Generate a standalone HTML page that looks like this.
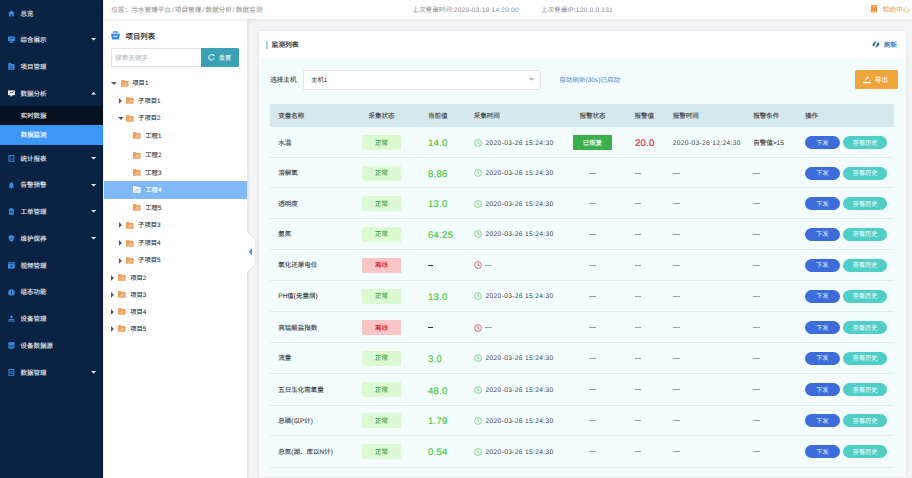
<!DOCTYPE html><html lang="zh-CN"><head><meta charset="utf-8"><style>
html,body{margin:0;padding:0;}
body{width:912px;height:478px;overflow:hidden;position:relative;background:#f4f4f6;font-family:"Liberation Sans",sans-serif;text-rendering:geometricPrecision;}
.t{position:absolute;white-space:nowrap;}
.b{position:absolute;}
svg{position:absolute;overflow:visible;}
i{font-style:normal;margin:0 1.0px;}
b.n{font-weight:normal;letter-spacing:0.22px;}
</style></head><body>
<div class="b" style="left:0px;top:0px;width:103.3px;height:478px;background:#0a2342;box-shadow:inset -0.7px 0 0 rgba(0,0,0,0.25);"></div>
<div class="b" style="left:0px;top:106px;width:102.8px;height:19.2px;background:#06121f;"></div>
<div class="b" style="left:0px;top:125.2px;width:103.3px;height:19.4px;background:#3d97f6;"></div>
<svg style="left:7.90px;top:9.70px" width="6.8" height="6.8" viewBox="0 0 7 7"><path d="M3.5 0.2 L7 3.4 L6 3.4 L6 6.6 L4.3 6.6 L4.3 4.6 L2.7 4.6 L2.7 6.6 L1 6.6 L1 3.4 L0 3.4 Z" fill="#3a8ce0"/></svg>
<div class="t" style="left:20.60px;top:9.50px;font-size:6.45px;line-height:10px;color:#e6e9ed;-webkit-text-stroke:0.12px #e6e9ed;">总览</div>
<svg style="left:7.90px;top:36.40px" width="6.8" height="6.8" viewBox="0 0 7 7"><rect x="0" y="0.5" width="7" height="4.8" fill="#3a8ce0"/><rect x="2.5" y="5.3" width="2" height="1" fill="#3a8ce0"/><rect x="1.5" y="6.2" width="4" height="0.8" fill="#3a8ce0"/><path d="M1.5 3.5 L3 2 L4 3 L5.5 1.5" stroke="#0b2240" stroke-width="0.6" fill="none"/></svg>
<div class="t" style="left:20.60px;top:36.20px;font-size:6.45px;line-height:10px;color:#e6e9ed;-webkit-text-stroke:0.12px #e6e9ed;">综合展示</div>
<svg style="left:90.5px;top:38.40px" width="5.2" height="2.6" viewBox="0 0 5.2 2.6"><path d="M0 0 L5.2 0 L2.6 2.6 Z" fill="#e8ebee"/></svg>
<svg style="left:7.90px;top:63.10px" width="6.8" height="6.8" viewBox="0 0 7 7"><path d="M0.3 0 L3.2 0 L3.9 1.1 L6.7 1.1 L6.7 7 L0.3 7 Z" fill="#3a8ce0"/><rect x="2" y="3.6" width="3" height="0.6" fill="#0b2240"/><rect x="2" y="5" width="3" height="0.6" fill="#0b2240"/></svg>
<div class="t" style="left:20.60px;top:62.90px;font-size:6.45px;line-height:10px;color:#e6e9ed;-webkit-text-stroke:0.12px #e6e9ed;">项目管理</div>
<svg style="left:7.90px;top:89.90px" width="6.8" height="6.8" viewBox="0 0 7 7"><rect x="0" y="0.5" width="7" height="4.8" fill="#ffffff"/><rect x="2.5" y="5.3" width="2" height="1.2" fill="#ffffff"/><path d="M1.5 3.8 L3 2.2 L4 3.2 L5.5 1.6" stroke="#0b2240" stroke-width="0.7" fill="none"/></svg>
<div class="t" style="left:20.60px;top:89.70px;font-size:6.45px;line-height:10px;color:#e6e9ed;-webkit-text-stroke:0.12px #e6e9ed;">数据分析</div>
<svg style="left:90.5px;top:91.90px" width="5.2" height="2.6" viewBox="0 0 5.2 2.6"><path d="M0 2.6 L5.2 2.6 L2.6 0 Z" fill="#e8ebee"/></svg>
<svg style="left:7.90px;top:154.80px" width="6.8" height="6.8" viewBox="0 0 7 7"><rect x="0.5" y="0" width="6" height="7" fill="#3a8ce0"/><rect x="1.5" y="1" width="4" height="5" fill="#0b2240"/><rect x="2" y="1.6" width="1.2" height="1.2" fill="#3a8ce0"/><rect x="3.8" y="3.2" width="1.2" height="1.2" fill="#3a8ce0"/><rect x="2" y="4.4" width="1.2" height="1.2" fill="#3a8ce0"/></svg>
<div class="t" style="left:20.60px;top:154.60px;font-size:6.45px;line-height:10px;color:#e6e9ed;-webkit-text-stroke:0.12px #e6e9ed;">统计报表</div>
<svg style="left:90.5px;top:156.80px" width="5.2" height="2.6" viewBox="0 0 5.2 2.6"><path d="M0 0 L5.2 0 L2.6 2.6 Z" fill="#e8ebee"/></svg>
<svg style="left:7.90px;top:181.54px" width="6.8" height="6.8" viewBox="0 0 7 7"><path d="M3.5 0.3 C5.3 0.8 5.5 2.5 5.5 4.3 L6.5 5.6 L0.5 5.6 L1.5 4.3 C1.5 2.5 1.7 0.8 3.5 0.3 Z" fill="#3a8ce0"/><circle cx="3.5" cy="6.3" r="0.8" fill="#3a8ce0"/></svg>
<div class="t" style="left:20.60px;top:181.34px;font-size:6.45px;line-height:10px;color:#e6e9ed;-webkit-text-stroke:0.12px #e6e9ed;">告警预警</div>
<svg style="left:90.5px;top:183.54px" width="5.2" height="2.6" viewBox="0 0 5.2 2.6"><path d="M0 0 L5.2 0 L2.6 2.6 Z" fill="#e8ebee"/></svg>
<svg style="left:7.90px;top:208.28px" width="6.8" height="6.8" viewBox="0 0 7 7"><rect x="1" y="0.8" width="5" height="6.2" rx="0.4" fill="#3a8ce0"/><rect x="2.3" y="0.2" width="2.4" height="1.2" fill="#3a8ce0"/><rect x="2" y="3" width="3" height="0.6" fill="#0b2240"/><rect x="2" y="4.6" width="3" height="0.6" fill="#0b2240"/></svg>
<div class="t" style="left:20.60px;top:208.08px;font-size:6.45px;line-height:10px;color:#e6e9ed;-webkit-text-stroke:0.12px #e6e9ed;">工单管理</div>
<svg style="left:90.5px;top:210.28px" width="5.2" height="2.6" viewBox="0 0 5.2 2.6"><path d="M0 0 L5.2 0 L2.6 2.6 Z" fill="#e8ebee"/></svg>
<svg style="left:7.90px;top:235.02px" width="6.8" height="6.8" viewBox="0 0 7 7"><path d="M3.5 0 L6.5 1.2 C6.5 4 5.5 6 3.5 7 C1.5 6 0.5 4 0.5 1.2 Z" fill="#3a8ce0"/><path d="M2.2 3.5 L3.2 4.5 L4.9 2.6" stroke="#0b2240" stroke-width="0.7" fill="none"/></svg>
<div class="t" style="left:20.60px;top:234.82px;font-size:6.45px;line-height:10px;color:#e6e9ed;-webkit-text-stroke:0.12px #e6e9ed;">维护保养</div>
<svg style="left:90.5px;top:237.02px" width="5.2" height="2.6" viewBox="0 0 5.2 2.6"><path d="M0 0 L5.2 0 L2.6 2.6 Z" fill="#e8ebee"/></svg>
<svg style="left:7.90px;top:261.76px" width="6.8" height="6.8" viewBox="0 0 7 7"><rect x="0" y="0.3" width="7" height="6.4" fill="#3a8ce0"/><rect x="0" y="1.5" width="7" height="0.5" fill="#0b2240"/><path d="M2.8 3 L5 4.2 L2.8 5.4 Z" fill="#0b2240"/></svg>
<div class="t" style="left:20.60px;top:261.56px;font-size:6.45px;line-height:10px;color:#e6e9ed;-webkit-text-stroke:0.12px #e6e9ed;">视频管理</div>
<svg style="left:7.90px;top:288.50px" width="6.8" height="6.8" viewBox="0 0 7 7"><circle cx="3.5" cy="3.5" r="3.3" fill="#3a8ce0"/><rect x="3" y="1.5" width="1" height="2.5" fill="#0b2240"/><rect x="3" y="4.7" width="1" height="1" fill="#0b2240"/></svg>
<div class="t" style="left:20.60px;top:288.30px;font-size:6.45px;line-height:10px;color:#e6e9ed;-webkit-text-stroke:0.12px #e6e9ed;">组态功能</div>
<svg style="left:7.90px;top:315.24px" width="6.8" height="6.8" viewBox="0 0 7 7"><circle cx="3.5" cy="2" r="1.4" fill="#3a8ce0"/><path d="M0.3 6.8 L0.3 5 C1 3.8 6 3.8 6.7 5 L6.7 6.8 Z" fill="#3a8ce0"/><rect x="0.3" y="5.4" width="6.4" height="0.5" fill="#0b2240"/></svg>
<div class="t" style="left:20.60px;top:315.04px;font-size:6.45px;line-height:10px;color:#e6e9ed;-webkit-text-stroke:0.12px #e6e9ed;">设备管理</div>
<svg style="left:7.90px;top:341.98px" width="6.8" height="6.8" viewBox="0 0 7 7"><ellipse cx="3.5" cy="1.4" rx="3.3" ry="1.3" fill="#3a8ce0"/><rect x="0.2" y="1.4" width="6.6" height="4.2" fill="#3a8ce0"/><ellipse cx="3.5" cy="5.6" rx="3.3" ry="1.3" fill="#3a8ce0"/><path d="M0.2 3.1 Q3.5 4.6 6.8 3.1" stroke="#0b2240" stroke-width="0.5" fill="none"/><path d="M0.2 4.6 Q3.5 6.1 6.8 4.6" stroke="#0b2240" stroke-width="0.5" fill="none"/></svg>
<div class="t" style="left:20.60px;top:341.78px;font-size:6.45px;line-height:10px;color:#e6e9ed;-webkit-text-stroke:0.12px #e6e9ed;">设备数据源</div>
<svg style="left:7.90px;top:368.72px" width="6.8" height="6.8" viewBox="0 0 7 7"><rect x="0.5" y="0" width="6" height="7" fill="#3a8ce0"/><rect x="1.5" y="1" width="4" height="5" fill="#0b2240"/><rect x="2" y="2" width="3" height="0.6" fill="#3a8ce0"/><rect x="2" y="3.3" width="3" height="0.6" fill="#3a8ce0"/><rect x="2" y="4.6" width="3" height="0.6" fill="#3a8ce0"/></svg>
<div class="t" style="left:20.60px;top:368.52px;font-size:6.45px;line-height:10px;color:#e6e9ed;-webkit-text-stroke:0.12px #e6e9ed;">数据管理</div>
<svg style="left:90.5px;top:370.72px" width="5.2" height="2.6" viewBox="0 0 5.2 2.6"><path d="M0 0 L5.2 0 L2.6 2.6 Z" fill="#e8ebee"/></svg>
<div class="t" style="left:20.70px;top:112.10px;font-size:6.45px;line-height:10px;color:#e6e9ed;-webkit-text-stroke:0.12px #e6e9ed;">实时数据</div>
<div class="t" style="left:20.70px;top:131.40px;font-size:6.45px;line-height:10px;color:#ffffff;-webkit-text-stroke:0.12px #fff;">数据监测</div>
<div class="b" style="left:103.5px;top:0px;width:808.5px;height:19.4px;background:#ffffff;box-shadow:0 1px 3px rgba(0,0,0,0.10);z-index:2;"></div>
<div style="position:absolute;left:0;top:0;width:912px;height:19px;z-index:3;">
<div class="t" style="left:111.20px;top:5.50px;font-size:6.65px;line-height:10px;color:#8a8a8a;">位置：污水管理平台<i>/</i>项目管理<i>/</i>数据分析<i>/</i>数据监测</div>
<div class="t" style="left:412.50px;top:5.50px;font-size:6.55px;line-height:10px;color:#8a8a8a;">上次登录时间<b class=n>:2020-03-19 14:20:00</b></div>
<div class="t" style="left:541.00px;top:5.50px;font-size:6.55px;line-height:10px;color:#8a8a8a;">上次登录<b class=n>IP:128.0.0.131</b></div>
<svg style="left:871px;top:5.3px" width="6" height="7.6" viewBox="0 0 6 7.6"><rect x="0" y="0" width="6" height="7.6" rx="0.4" fill="#f0953a"/><rect x="2.6" y="0" width="0.8" height="2.6" fill="#ffffff"/><rect x="0.7" y="6.1" width="4.6" height="0.7" fill="#f9d2aa"/></svg>
<div class="t" style="left:882.40px;top:5.90px;font-size:6.8px;line-height:10px;color:#f29a48;">帮助中心</div>
</div>
<div class="b" style="left:103.5px;top:19px;width:143.5px;height:459px;background:#ffffff;box-shadow:1px 0 3px rgba(0,0,0,0.10);z-index:1;"></div>
<div style="position:absolute;left:0;top:0;width:912px;height:478px;z-index:2;">
<svg style="left:111px;top:30.5px" width="9" height="8.4" viewBox="0 0 9 8.4"><path d="M2.5 0 L6.5 0 L7.6 2.2 L1.4 2.2 Z" fill="#6aaef5"/><path d="M0 2.8 L9 2.8 L8 8.4 L1 8.4 Z" fill="#3d8ff2"/><rect x="2.6" y="4.8" width="3.8" height="0.9" fill="#ffffff"/></svg>
<div class="t" style="left:125.50px;top:31.80px;font-size:7.4px;line-height:10px;color:#2a2a2a;-webkit-text-stroke:0.2px #2a2a2a;">项目列表</div>
<div class="b" style="left:110.5px;top:48.3px;width:90px;height:18.4px;background:#ffffff;box-sizing:border-box;border:0.6px solid #e0e3e9;border-right:none;border-radius:1.5px 0 0 1.5px;"></div>
<div class="t" style="left:115.00px;top:53.80px;font-size:6.6px;line-height:10px;color:#b6b9bf;">搜索关键字</div>
<div class="b" style="left:200.5px;top:48.3px;width:38.3px;height:18.4px;background:#3aa1b6;border-radius:0 1.5px 1.5px 0;"></div>
<svg style="left:207.6px;top:54.2px" width="6.8" height="6.8" viewBox="0 0 7 7"><path d="M5.9 2 A2.8 2.8 0 1 0 6.2 4.3" stroke="#ffffff" stroke-width="1" fill="none"/><path d="M4.6 0.6 L6.5 0.9 L6.3 2.9 Z" fill="#ffffff"/></svg>
<div class="t" style="left:218.80px;top:53.60px;font-size:6.2px;line-height:10px;color:#ffffff;">重置</div>
<div class="b" style="left:104px;top:180.7px;width:143px;height:18.2px;background:#80b8f8;"></div>
<svg style="left:121.0px;top:79.70px" width="7.6" height="6.7" viewBox="0 0 7.6 6.7"><path d="M0 0.5 Q0 0 0.5 0 L2.6 0 Q3 0 3.3 0.4 L3.8 1 L7.1 1 Q7.6 1 7.6 1.5 L7.6 6.2 Q7.6 6.7 7.1 6.7 L0.5 6.7 Q0 6.7 0 6.2 Z" fill="#f0a05c"/><rect x="3.2" y="2.9" width="2.9" height="0.7" fill="#f9dcc2"/><rect x="1.6" y="4.6" width="4.5" height="0.7" fill="#f9dcc2"/></svg>
<div class="t" style="left:132.30px;top:79.20px;font-size:6.3px;line-height:10px;color:#3c3c3c;-webkit-text-stroke:0.1px #3c3c3c;">项目1</div>
<svg style="left:110.90px;top:81.80px" width="5.8" height="2.9" viewBox="0 0 5.8 2.9"><path d="M0 0 L5.8 0 L2.9 2.9 Z" fill="#555"/></svg>
<svg style="left:126.0px;top:97.10px" width="7.6" height="6.7" viewBox="0 0 7.6 6.7"><path d="M0 0.5 Q0 0 0.5 0 L2.6 0 Q3 0 3.3 0.4 L3.8 1 L7.1 1 Q7.6 1 7.6 1.5 L7.6 6.2 Q7.6 6.7 7.1 6.7 L0.5 6.7 Q0 6.7 0 6.2 Z" fill="#f0a05c"/><rect x="3.2" y="2.9" width="2.9" height="0.7" fill="#f9dcc2"/><rect x="1.6" y="4.6" width="4.5" height="0.7" fill="#f9dcc2"/></svg>
<div class="t" style="left:138.10px;top:96.60px;font-size:6.3px;line-height:10px;color:#3c3c3c;-webkit-text-stroke:0.1px #3c3c3c;">子项目1</div>
<svg style="left:118.90px;top:97.70px" width="2.9" height="5.8" viewBox="0 0 2.9 5.8"><path d="M0 0 L2.9 2.9 L0 5.8 Z" fill="#555"/></svg>
<svg style="left:126.0px;top:114.70px" width="7.6" height="6.7" viewBox="0 0 7.6 6.7"><path d="M0 0.5 Q0 0 0.5 0 L2.6 0 Q3 0 3.3 0.4 L3.8 1 L7.1 1 Q7.6 1 7.6 1.5 L7.6 6.2 Q7.6 6.7 7.1 6.7 L0.5 6.7 Q0 6.7 0 6.2 Z" fill="#f0a05c"/><rect x="3.2" y="2.9" width="2.9" height="0.7" fill="#f9dcc2"/><rect x="1.6" y="4.6" width="4.5" height="0.7" fill="#f9dcc2"/></svg>
<div class="t" style="left:138.10px;top:114.20px;font-size:6.3px;line-height:10px;color:#3c3c3c;-webkit-text-stroke:0.1px #3c3c3c;">子项目2</div>
<svg style="left:117.60px;top:116.80px" width="5.8" height="2.9" viewBox="0 0 5.8 2.9"><path d="M0 0 L5.8 0 L2.9 2.9 Z" fill="#555"/></svg>
<svg style="left:133.1px;top:132.40px" width="7.6" height="6.7" viewBox="0 0 7.6 6.7"><path d="M0 0.5 Q0 0 0.5 0 L2.6 0 Q3 0 3.3 0.4 L3.8 1 L7.1 1 Q7.6 1 7.6 1.5 L7.6 6.2 Q7.6 6.7 7.1 6.7 L0.5 6.7 Q0 6.7 0 6.2 Z" fill="#f0a05c"/><rect x="3.2" y="2.9" width="2.9" height="0.7" fill="#f9dcc2"/><rect x="1.6" y="4.6" width="4.5" height="0.7" fill="#f9dcc2"/></svg>
<div class="t" style="left:145.30px;top:131.90px;font-size:6.3px;line-height:10px;color:#3c3c3c;-webkit-text-stroke:0.1px #3c3c3c;">工程1</div>
<svg style="left:133.1px;top:151.90px" width="7.6" height="6.7" viewBox="0 0 7.6 6.7"><path d="M0 0.5 Q0 0 0.5 0 L2.6 0 Q3 0 3.3 0.4 L3.8 1 L7.1 1 Q7.6 1 7.6 1.5 L7.6 6.2 Q7.6 6.7 7.1 6.7 L0.5 6.7 Q0 6.7 0 6.2 Z" fill="#f0a05c"/><rect x="3.2" y="2.9" width="2.9" height="0.7" fill="#f9dcc2"/><rect x="1.6" y="4.6" width="4.5" height="0.7" fill="#f9dcc2"/></svg>
<div class="t" style="left:145.30px;top:151.40px;font-size:6.3px;line-height:10px;color:#3c3c3c;-webkit-text-stroke:0.1px #3c3c3c;">工程2</div>
<svg style="left:133.1px;top:169.30px" width="7.6" height="6.7" viewBox="0 0 7.6 6.7"><path d="M0 0.5 Q0 0 0.5 0 L2.6 0 Q3 0 3.3 0.4 L3.8 1 L7.1 1 Q7.6 1 7.6 1.5 L7.6 6.2 Q7.6 6.7 7.1 6.7 L0.5 6.7 Q0 6.7 0 6.2 Z" fill="#f0a05c"/><rect x="3.2" y="2.9" width="2.9" height="0.7" fill="#f9dcc2"/><rect x="1.6" y="4.6" width="4.5" height="0.7" fill="#f9dcc2"/></svg>
<div class="t" style="left:145.30px;top:168.80px;font-size:6.3px;line-height:10px;color:#3c3c3c;-webkit-text-stroke:0.1px #3c3c3c;">工程3</div>
<svg style="left:133.1px;top:186.30px" width="7.6" height="6.7" viewBox="0 0 7.6 6.7"><path d="M0 0.5 Q0 0 0.5 0 L2.6 0 Q3 0 3.3 0.4 L3.8 1 L7.1 1 Q7.6 1 7.6 1.5 L7.6 6.2 Q7.6 6.7 7.1 6.7 L0.5 6.7 Q0 6.7 0 6.2 Z" fill="#ffffff"/><rect x="3.2" y="2.9" width="2.9" height="0.7" fill="#80b8f8"/><rect x="1.6" y="4.6" width="4.5" height="0.7" fill="#80b8f8"/></svg>
<div class="t" style="left:145.30px;top:185.80px;font-size:6.3px;line-height:10px;color:#ffffff;-webkit-text-stroke:0.1px #ffffff;">工程4</div>
<svg style="left:133.1px;top:204.00px" width="7.6" height="6.7" viewBox="0 0 7.6 6.7"><path d="M0 0.5 Q0 0 0.5 0 L2.6 0 Q3 0 3.3 0.4 L3.8 1 L7.1 1 Q7.6 1 7.6 1.5 L7.6 6.2 Q7.6 6.7 7.1 6.7 L0.5 6.7 Q0 6.7 0 6.2 Z" fill="#f0a05c"/><rect x="3.2" y="2.9" width="2.9" height="0.7" fill="#f9dcc2"/><rect x="1.6" y="4.6" width="4.5" height="0.7" fill="#f9dcc2"/></svg>
<div class="t" style="left:145.30px;top:203.50px;font-size:6.3px;line-height:10px;color:#3c3c3c;-webkit-text-stroke:0.1px #3c3c3c;">工程5</div>
<svg style="left:126.0px;top:221.80px" width="7.6" height="6.7" viewBox="0 0 7.6 6.7"><path d="M0 0.5 Q0 0 0.5 0 L2.6 0 Q3 0 3.3 0.4 L3.8 1 L7.1 1 Q7.6 1 7.6 1.5 L7.6 6.2 Q7.6 6.7 7.1 6.7 L0.5 6.7 Q0 6.7 0 6.2 Z" fill="#f0a05c"/><rect x="3.2" y="2.9" width="2.9" height="0.7" fill="#f9dcc2"/><rect x="1.6" y="4.6" width="4.5" height="0.7" fill="#f9dcc2"/></svg>
<div class="t" style="left:138.10px;top:221.30px;font-size:6.3px;line-height:10px;color:#3c3c3c;-webkit-text-stroke:0.1px #3c3c3c;">子项目3</div>
<svg style="left:118.90px;top:222.40px" width="2.9" height="5.8" viewBox="0 0 2.9 5.8"><path d="M0 0 L2.9 2.9 L0 5.8 Z" fill="#555"/></svg>
<svg style="left:126.0px;top:239.50px" width="7.6" height="6.7" viewBox="0 0 7.6 6.7"><path d="M0 0.5 Q0 0 0.5 0 L2.6 0 Q3 0 3.3 0.4 L3.8 1 L7.1 1 Q7.6 1 7.6 1.5 L7.6 6.2 Q7.6 6.7 7.1 6.7 L0.5 6.7 Q0 6.7 0 6.2 Z" fill="#f0a05c"/><rect x="3.2" y="2.9" width="2.9" height="0.7" fill="#f9dcc2"/><rect x="1.6" y="4.6" width="4.5" height="0.7" fill="#f9dcc2"/></svg>
<div class="t" style="left:138.10px;top:239.00px;font-size:6.3px;line-height:10px;color:#3c3c3c;-webkit-text-stroke:0.1px #3c3c3c;">子项目4</div>
<svg style="left:118.90px;top:240.10px" width="2.9" height="5.8" viewBox="0 0 2.9 5.8"><path d="M0 0 L2.9 2.9 L0 5.8 Z" fill="#555"/></svg>
<svg style="left:126.0px;top:256.90px" width="7.6" height="6.7" viewBox="0 0 7.6 6.7"><path d="M0 0.5 Q0 0 0.5 0 L2.6 0 Q3 0 3.3 0.4 L3.8 1 L7.1 1 Q7.6 1 7.6 1.5 L7.6 6.2 Q7.6 6.7 7.1 6.7 L0.5 6.7 Q0 6.7 0 6.2 Z" fill="#f0a05c"/><rect x="3.2" y="2.9" width="2.9" height="0.7" fill="#f9dcc2"/><rect x="1.6" y="4.6" width="4.5" height="0.7" fill="#f9dcc2"/></svg>
<div class="t" style="left:138.10px;top:256.40px;font-size:6.3px;line-height:10px;color:#3c3c3c;-webkit-text-stroke:0.1px #3c3c3c;">子项目5</div>
<svg style="left:118.90px;top:257.50px" width="2.9" height="5.8" viewBox="0 0 2.9 5.8"><path d="M0 0 L2.9 2.9 L0 5.8 Z" fill="#555"/></svg>
<svg style="left:118.0px;top:274.20px" width="7.6" height="6.7" viewBox="0 0 7.6 6.7"><path d="M0 0.5 Q0 0 0.5 0 L2.6 0 Q3 0 3.3 0.4 L3.8 1 L7.1 1 Q7.6 1 7.6 1.5 L7.6 6.2 Q7.6 6.7 7.1 6.7 L0.5 6.7 Q0 6.7 0 6.2 Z" fill="#f0a05c"/><rect x="3.2" y="2.9" width="2.9" height="0.7" fill="#f9dcc2"/><rect x="1.6" y="4.6" width="4.5" height="0.7" fill="#f9dcc2"/></svg>
<div class="t" style="left:130.20px;top:273.70px;font-size:6.3px;line-height:10px;color:#3c3c3c;-webkit-text-stroke:0.1px #3c3c3c;">项目2</div>
<svg style="left:111.10px;top:274.80px" width="2.9" height="5.8" viewBox="0 0 2.9 5.8"><path d="M0 0 L2.9 2.9 L0 5.8 Z" fill="#555"/></svg>
<svg style="left:118.0px;top:291.30px" width="7.6" height="6.7" viewBox="0 0 7.6 6.7"><path d="M0 0.5 Q0 0 0.5 0 L2.6 0 Q3 0 3.3 0.4 L3.8 1 L7.1 1 Q7.6 1 7.6 1.5 L7.6 6.2 Q7.6 6.7 7.1 6.7 L0.5 6.7 Q0 6.7 0 6.2 Z" fill="#f0a05c"/><rect x="3.2" y="2.9" width="2.9" height="0.7" fill="#f9dcc2"/><rect x="1.6" y="4.6" width="4.5" height="0.7" fill="#f9dcc2"/></svg>
<div class="t" style="left:130.20px;top:290.80px;font-size:6.3px;line-height:10px;color:#3c3c3c;-webkit-text-stroke:0.1px #3c3c3c;">项目3</div>
<svg style="left:111.10px;top:291.90px" width="2.9" height="5.8" viewBox="0 0 2.9 5.8"><path d="M0 0 L2.9 2.9 L0 5.8 Z" fill="#555"/></svg>
<svg style="left:118.0px;top:308.40px" width="7.6" height="6.7" viewBox="0 0 7.6 6.7"><path d="M0 0.5 Q0 0 0.5 0 L2.6 0 Q3 0 3.3 0.4 L3.8 1 L7.1 1 Q7.6 1 7.6 1.5 L7.6 6.2 Q7.6 6.7 7.1 6.7 L0.5 6.7 Q0 6.7 0 6.2 Z" fill="#f0a05c"/><rect x="3.2" y="2.9" width="2.9" height="0.7" fill="#f9dcc2"/><rect x="1.6" y="4.6" width="4.5" height="0.7" fill="#f9dcc2"/></svg>
<div class="t" style="left:130.20px;top:307.90px;font-size:6.3px;line-height:10px;color:#3c3c3c;-webkit-text-stroke:0.1px #3c3c3c;">项目4</div>
<svg style="left:111.10px;top:309.00px" width="2.9" height="5.8" viewBox="0 0 2.9 5.8"><path d="M0 0 L2.9 2.9 L0 5.8 Z" fill="#555"/></svg>
<svg style="left:118.0px;top:325.40px" width="7.6" height="6.7" viewBox="0 0 7.6 6.7"><path d="M0 0.5 Q0 0 0.5 0 L2.6 0 Q3 0 3.3 0.4 L3.8 1 L7.1 1 Q7.6 1 7.6 1.5 L7.6 6.2 Q7.6 6.7 7.1 6.7 L0.5 6.7 Q0 6.7 0 6.2 Z" fill="#f0a05c"/><rect x="3.2" y="2.9" width="2.9" height="0.7" fill="#f9dcc2"/><rect x="1.6" y="4.6" width="4.5" height="0.7" fill="#f9dcc2"/></svg>
<div class="t" style="left:130.20px;top:324.90px;font-size:6.3px;line-height:10px;color:#3c3c3c;-webkit-text-stroke:0.1px #3c3c3c;">项目5</div>
<svg style="left:111.10px;top:326.00px" width="2.9" height="5.8" viewBox="0 0 2.9 5.8"><path d="M0 0 L2.9 2.9 L0 5.8 Z" fill="#555"/></svg>
</div>
<svg style="left:245.8px;top:228.8px;z-index:2" width="11" height="46" viewBox="0 0 11 46"><path d="M1 0 C1 4 2.5 5.5 5 7.5 C7.8 9.5 8.9 10.5 8.9 13 L8.9 33 C8.9 35.5 7.8 36.5 5 38.5 C2.5 40.5 1 42 1 46" stroke="rgba(0,0,0,0.035)" stroke-width="2" fill="none" transform="translate(0.6,0)"/><path d="M0 0 L1 0 C1 4 2.5 5.5 5 7.5 C7.8 9.5 8.9 10.5 8.9 13 L8.9 33 C8.9 35.5 7.8 36.5 5 38.5 C2.5 40.5 1 42 1 46 L0 46 Z" fill="#ffffff"/></svg>
<svg style="left:248.9px;top:248.2px;z-index:3" width="3" height="7.4" viewBox="0 0 3 7.4"><path d="M3 0 L0 3.7 L3 7.4 Z" fill="#3a8ee6"/></svg>
<div class="b" style="left:259px;top:31px;width:647px;height:446px;background:#f3fcfe;box-shadow:0 0 3px rgba(0,0,0,0.12);"></div>
<div class="b" style="left:259px;top:31px;width:647px;height:27.3px;background:#ffffff;"></div>
<div class="b" style="left:266.1px;top:41.1px;width:1.8px;height:7.8px;background:#a4d0fb;"></div>
<div class="t" style="left:271.40px;top:40.90px;font-size:6.75px;line-height:10px;color:#333333;-webkit-text-stroke:0.2px #333;">监测列表</div>
<svg style="left:872px;top:41.2px" width="8" height="6.8" viewBox="0 0 8 6.8"><path d="M4.3 0.2 C2.2 0.8 0.6 2.4 0.5 4.1 C0.5 5.3 1.9 5.6 2.5 4.7 C2.4 3.2 3.1 1.8 4.5 1.0 Z" fill="#1f66a6"/><path d="M3.5 6.6 C5.6 6 7.2 4.4 7.3 2.7 C7.3 1.5 5.9 1.2 5.3 2.1 C5.4 3.6 4.7 5 3.3 5.8 Z" fill="#1f66a6"/></svg>
<div class="t" style="left:884.00px;top:40.60px;font-size:6.5px;line-height:10px;color:#2a6cae;-webkit-text-stroke:0.15px #2a6cae;">刷新</div>
<div class="t" style="left:270.20px;top:75.80px;font-size:6.6px;line-height:10px;color:#3c3c3c;-webkit-text-stroke:0.1px #3c3c3c;">选择主机</div>
<div class="b" style="left:302.5px;top:69.5px;width:238.8px;height:20.1px;background:#ffffff;box-sizing:border-box;border:0.6px solid #e0e3e9;border-radius:1.5px;"></div>
<div class="t" style="left:311.00px;top:75.80px;font-size:6.4px;line-height:10px;color:#3c3c3c;">主机1</div>
<svg style="left:528.5px;top:78.4px" width="5.6" height="2.8" viewBox="0 0 5.6 2.8"><path d="M0 0 L5.6 0 L2.8 2.8 Z" fill="#b0b3b8"/></svg>
<div class="t" style="left:559.30px;top:75.80px;font-size:6.55px;line-height:10px;color:#4a8cc6;">自动刷新(30s)已启动</div>
<div class="b" style="left:855.1px;top:70px;width:42.8px;height:18.9px;background:#eda53c;border-radius:1.5px;"></div>
<svg style="left:863px;top:76px" width="8" height="7.4" viewBox="0 0 8 7.4"><rect x="0" y="5.8" width="7.9" height="1.5" rx="0.4" fill="#ffffff"/><path d="M2 4.9 C2.1 3.3 2.9 2.2 3.9 1.9 L3.7 0 L6 1.4 L4.5 3.4 L4.3 2.8 C3.4 3.2 2.7 4 2 4.9 Z" fill="#ffffff"/></svg>
<div class="t" style="left:874.70px;top:76.00px;font-size:6.65px;line-height:10px;color:#ffffff;">导出</div>
<div class="b" style="left:270.3px;top:104.3px;width:624px;height:22.9px;background:#d5e8ed;"></div>
<div class="t" style="left:278.30px;top:111.90px;font-size:6.5px;line-height:10px;color:#3c3c3c;-webkit-text-stroke:0.1px #3c3c3c;">变量名称</div>
<div class="t" style="left:361.50px;width:40.00px;text-align:center;top:111.90px;font-size:6.5px;line-height:10px;color:#3c3c3c;-webkit-text-stroke:0.1px #3c3c3c;">采集状态</div>
<div class="t" style="left:428.00px;top:111.90px;font-size:6.5px;line-height:10px;color:#3c3c3c;-webkit-text-stroke:0.1px #3c3c3c;">当前值</div>
<div class="t" style="left:473.75px;top:111.90px;font-size:6.5px;line-height:10px;color:#3c3c3c;-webkit-text-stroke:0.1px #3c3c3c;">采集时间</div>
<div class="t" style="left:572.60px;width:40.00px;text-align:center;top:111.90px;font-size:6.5px;line-height:10px;color:#3c3c3c;-webkit-text-stroke:0.1px #3c3c3c;">报警状态</div>
<div class="t" style="left:634.50px;top:111.90px;font-size:6.5px;line-height:10px;color:#3c3c3c;-webkit-text-stroke:0.1px #3c3c3c;">报警值</div>
<div class="t" style="left:672.75px;top:111.90px;font-size:6.5px;line-height:10px;color:#3c3c3c;-webkit-text-stroke:0.1px #3c3c3c;">报警时间</div>
<div class="t" style="left:753.25px;top:111.90px;font-size:6.5px;line-height:10px;color:#3c3c3c;-webkit-text-stroke:0.1px #3c3c3c;">报警条件</div>
<div class="t" style="left:805.00px;top:111.90px;font-size:6.5px;line-height:10px;color:#3c3c3c;-webkit-text-stroke:0.1px #3c3c3c;">操作</div>
<div class="t" style="left:278.30px;top:138.60px;font-size:6.5px;line-height:10px;color:#3c3c3c;-webkit-text-stroke:0.1px #3c3c3c;">水温</div>
<div class="b" style="left:362.1px;top:135.1px;width:38.7px;height:15px;background:#dcfad2;"></div>
<div class="t" style="left:362.05px;width:38.70px;text-align:center;top:138.60px;font-size:6.4px;line-height:10px;color:#2f9a40;-webkit-text-stroke:0.12px #2f9a40;">正常</div>
<div class="t" style="left:428.00px;top:137.40px;font-size:9.5px;line-height:14px;color:#45c936;letter-spacing:0.3px;-webkit-text-stroke:0.15px #45c936;">14.0</div>
<svg style="left:473.75px;top:138.60px" width="8" height="8" viewBox="0 0 8 8"><circle cx="4" cy="4" r="3.4" stroke="#6fd06a" stroke-width="0.8" fill="none"/><path d="M4 1.9 L4 4.2 L5.5 5.1" stroke="#6fd06a" stroke-width="0.8" fill="none"/></svg>
<div class="t" style="left:485.50px;top:138.60px;font-size:6.65px;line-height:10px;color:#444444;letter-spacing:0.34px;">2020-03-26 15:24:30</div>
<div class="b" style="left:573.25px;top:135.1px;width:38.25px;height:15px;background:#3bb14d;"></div>
<div class="t" style="left:573.27px;width:38.25px;text-align:center;top:138.60px;font-size:6.4px;line-height:10px;color:#ffffff;-webkit-text-stroke:0.1px #ffffff;">已恢复</div>
<div class="t" style="left:635.00px;top:137.40px;font-size:9.5px;line-height:14px;color:#d8232f;letter-spacing:0.3px;-webkit-text-stroke:0.15px #d8232f;">20.0</div>
<div class="t" style="left:672.75px;top:138.60px;font-size:6.65px;line-height:10px;color:#444444;letter-spacing:0.34px;">2020-03-26 12:24:30</div>
<div class="t" style="left:753.25px;top:138.60px;font-size:6.5px;line-height:10px;color:#3c3c3c;-webkit-text-stroke:0.1px #3c3c3c;">告警值&gt;15</div>
<div class="b" style="left:804.9px;top:135.9px;width:34.8px;height:13.4px;background:#3b6cd9;border-radius:7px;"></div>
<div class="t" style="left:804.90px;width:34.80px;text-align:center;top:138.60px;font-size:6.3px;line-height:10px;color:#f0f4ff;">下发</div>
<div class="b" style="left:843.2px;top:135.9px;width:43.7px;height:13.4px;background:#50cec8;border-radius:7px;"></div>
<div class="t" style="left:843.20px;width:43.70px;text-align:center;top:138.60px;font-size:6.3px;line-height:10px;color:#f0fffd;">查看历史</div>
<div class="b" style="left:270.1px;top:157.3px;width:624.2px;height:1px;background:#e6ecee;"></div>
<div class="t" style="left:278.30px;top:169.30px;font-size:6.5px;line-height:10px;color:#3c3c3c;-webkit-text-stroke:0.1px #3c3c3c;">溶解氧</div>
<div class="b" style="left:362.1px;top:165.8px;width:38.7px;height:15px;background:#dcfad2;"></div>
<div class="t" style="left:362.05px;width:38.70px;text-align:center;top:169.30px;font-size:6.4px;line-height:10px;color:#2f9a40;-webkit-text-stroke:0.12px #2f9a40;">正常</div>
<div class="t" style="left:428.00px;top:168.10px;font-size:9.5px;line-height:14px;color:#45c936;letter-spacing:0.3px;-webkit-text-stroke:0.15px #45c936;">8.86</div>
<svg style="left:473.75px;top:169.30px" width="8" height="8" viewBox="0 0 8 8"><circle cx="4" cy="4" r="3.4" stroke="#6fd06a" stroke-width="0.8" fill="none"/><path d="M4 1.9 L4 4.2 L5.5 5.1" stroke="#6fd06a" stroke-width="0.8" fill="none"/></svg>
<div class="t" style="left:485.50px;top:169.30px;font-size:6.65px;line-height:10px;color:#444444;letter-spacing:0.34px;">2020-03-26 15:24:30</div>
<div class="b" style="left:589px;top:173.0px;width:6.8px;height:0.7px;background:#9a9a9a;"></div>
<div class="b" style="left:634.5px;top:173.0px;width:6.8px;height:0.7px;background:#9a9a9a;"></div>
<div class="b" style="left:672.75px;top:173.0px;width:6.8px;height:0.7px;background:#9a9a9a;"></div>
<div class="b" style="left:752.75px;top:173.0px;width:6.8px;height:0.7px;background:#9a9a9a;"></div>
<div class="b" style="left:804.9px;top:166.60000000000002px;width:34.8px;height:13.4px;background:#3b6cd9;border-radius:7px;"></div>
<div class="t" style="left:804.90px;width:34.80px;text-align:center;top:169.30px;font-size:6.3px;line-height:10px;color:#f0f4ff;">下发</div>
<div class="b" style="left:843.2px;top:166.60000000000002px;width:43.7px;height:13.4px;background:#50cec8;border-radius:7px;"></div>
<div class="t" style="left:843.20px;width:43.70px;text-align:center;top:169.30px;font-size:6.3px;line-height:10px;color:#f0fffd;">查看历史</div>
<div class="b" style="left:270.1px;top:187.4px;width:624.2px;height:1px;background:#e6ecee;"></div>
<div class="t" style="left:278.30px;top:199.60px;font-size:6.5px;line-height:10px;color:#3c3c3c;-webkit-text-stroke:0.1px #3c3c3c;">透明度</div>
<div class="b" style="left:362.1px;top:196.1px;width:38.7px;height:15px;background:#dcfad2;"></div>
<div class="t" style="left:362.05px;width:38.70px;text-align:center;top:199.60px;font-size:6.4px;line-height:10px;color:#2f9a40;-webkit-text-stroke:0.12px #2f9a40;">正常</div>
<div class="t" style="left:428.00px;top:198.40px;font-size:9.5px;line-height:14px;color:#45c936;letter-spacing:0.3px;-webkit-text-stroke:0.15px #45c936;">13.0</div>
<svg style="left:473.75px;top:199.60px" width="8" height="8" viewBox="0 0 8 8"><circle cx="4" cy="4" r="3.4" stroke="#6fd06a" stroke-width="0.8" fill="none"/><path d="M4 1.9 L4 4.2 L5.5 5.1" stroke="#6fd06a" stroke-width="0.8" fill="none"/></svg>
<div class="t" style="left:485.50px;top:199.60px;font-size:6.65px;line-height:10px;color:#444444;letter-spacing:0.34px;">2020-03-26 15:24:30</div>
<div class="b" style="left:589px;top:203.29999999999998px;width:6.8px;height:0.7px;background:#9a9a9a;"></div>
<div class="b" style="left:634.5px;top:203.29999999999998px;width:6.8px;height:0.7px;background:#9a9a9a;"></div>
<div class="b" style="left:672.75px;top:203.29999999999998px;width:6.8px;height:0.7px;background:#9a9a9a;"></div>
<div class="b" style="left:752.75px;top:203.29999999999998px;width:6.8px;height:0.7px;background:#9a9a9a;"></div>
<div class="b" style="left:804.9px;top:196.9px;width:34.8px;height:13.4px;background:#3b6cd9;border-radius:7px;"></div>
<div class="t" style="left:804.90px;width:34.80px;text-align:center;top:199.60px;font-size:6.3px;line-height:10px;color:#f0f4ff;">下发</div>
<div class="b" style="left:843.2px;top:196.9px;width:43.7px;height:13.4px;background:#50cec8;border-radius:7px;"></div>
<div class="t" style="left:843.20px;width:43.70px;text-align:center;top:199.60px;font-size:6.3px;line-height:10px;color:#f0fffd;">查看历史</div>
<div class="b" style="left:270.1px;top:217.7px;width:624.2px;height:1px;background:#e6ecee;"></div>
<div class="t" style="left:278.30px;top:230.20px;font-size:6.5px;line-height:10px;color:#3c3c3c;-webkit-text-stroke:0.1px #3c3c3c;">氨氮</div>
<div class="b" style="left:362.1px;top:226.7px;width:38.7px;height:15px;background:#dcfad2;"></div>
<div class="t" style="left:362.05px;width:38.70px;text-align:center;top:230.20px;font-size:6.4px;line-height:10px;color:#2f9a40;-webkit-text-stroke:0.12px #2f9a40;">正常</div>
<div class="t" style="left:428.00px;top:229.00px;font-size:9.5px;line-height:14px;color:#45c936;letter-spacing:0.3px;-webkit-text-stroke:0.15px #45c936;">64.25</div>
<svg style="left:473.75px;top:230.20px" width="8" height="8" viewBox="0 0 8 8"><circle cx="4" cy="4" r="3.4" stroke="#6fd06a" stroke-width="0.8" fill="none"/><path d="M4 1.9 L4 4.2 L5.5 5.1" stroke="#6fd06a" stroke-width="0.8" fill="none"/></svg>
<div class="t" style="left:485.50px;top:230.20px;font-size:6.65px;line-height:10px;color:#444444;letter-spacing:0.34px;">2020-03-26 15:24:30</div>
<div class="b" style="left:589px;top:233.89999999999998px;width:6.8px;height:0.7px;background:#9a9a9a;"></div>
<div class="b" style="left:634.5px;top:233.89999999999998px;width:6.8px;height:0.7px;background:#9a9a9a;"></div>
<div class="b" style="left:672.75px;top:233.89999999999998px;width:6.8px;height:0.7px;background:#9a9a9a;"></div>
<div class="b" style="left:752.75px;top:233.89999999999998px;width:6.8px;height:0.7px;background:#9a9a9a;"></div>
<div class="b" style="left:804.9px;top:227.5px;width:34.8px;height:13.4px;background:#3b6cd9;border-radius:7px;"></div>
<div class="t" style="left:804.90px;width:34.80px;text-align:center;top:230.20px;font-size:6.3px;line-height:10px;color:#f0f4ff;">下发</div>
<div class="b" style="left:843.2px;top:227.5px;width:43.7px;height:13.4px;background:#50cec8;border-radius:7px;"></div>
<div class="t" style="left:843.20px;width:43.70px;text-align:center;top:230.20px;font-size:6.3px;line-height:10px;color:#f0fffd;">查看历史</div>
<div class="b" style="left:270.1px;top:248.8px;width:624.2px;height:1px;background:#e6ecee;"></div>
<div class="t" style="left:278.30px;top:261.30px;font-size:6.5px;line-height:10px;color:#3c3c3c;-webkit-text-stroke:0.1px #3c3c3c;">氧化还原电位</div>
<div class="b" style="left:362.1px;top:257.8px;width:38.7px;height:15px;background:#fbc5c6;"></div>
<div class="t" style="left:362.05px;width:38.70px;text-align:center;top:261.30px;font-size:6.4px;line-height:10px;color:#d8262e;-webkit-text-stroke:0.12px #d8262e;">离线</div>
<div class="b" style="left:427.9px;top:264.7px;width:5.3px;height:1.2px;background:#333333;"></div>
<svg style="left:473.75px;top:261.30px" width="8" height="8" viewBox="0 0 8 8"><circle cx="4" cy="4" r="3.4" stroke="#e04a50" stroke-width="0.8" fill="none"/><path d="M4 1.9 L4 4.2 L5.5 5.1" stroke="#e04a50" stroke-width="0.8" fill="none"/></svg>
<div class="b" style="left:485px;top:264.85px;width:6.8px;height:0.9px;background:#a0a0a0;"></div>
<div class="b" style="left:589px;top:265.0px;width:6.8px;height:0.7px;background:#9a9a9a;"></div>
<div class="b" style="left:634.5px;top:265.0px;width:6.8px;height:0.7px;background:#9a9a9a;"></div>
<div class="b" style="left:672.75px;top:265.0px;width:6.8px;height:0.7px;background:#9a9a9a;"></div>
<div class="b" style="left:752.75px;top:265.0px;width:6.8px;height:0.7px;background:#9a9a9a;"></div>
<div class="b" style="left:804.9px;top:258.6px;width:34.8px;height:13.4px;background:#3b6cd9;border-radius:7px;"></div>
<div class="t" style="left:804.90px;width:34.80px;text-align:center;top:261.30px;font-size:6.3px;line-height:10px;color:#f0f4ff;">下发</div>
<div class="b" style="left:843.2px;top:258.6px;width:43.7px;height:13.4px;background:#50cec8;border-radius:7px;"></div>
<div class="t" style="left:843.20px;width:43.70px;text-align:center;top:261.30px;font-size:6.3px;line-height:10px;color:#f0fffd;">查看历史</div>
<div class="b" style="left:270.1px;top:279.5px;width:624.2px;height:1px;background:#e6ecee;"></div>
<div class="t" style="left:278.30px;top:292.40px;font-size:6.5px;line-height:10px;color:#3c3c3c;-webkit-text-stroke:0.1px #3c3c3c;">PH值(无量纲)</div>
<div class="b" style="left:362.1px;top:288.9px;width:38.7px;height:15px;background:#dcfad2;"></div>
<div class="t" style="left:362.05px;width:38.70px;text-align:center;top:292.40px;font-size:6.4px;line-height:10px;color:#2f9a40;-webkit-text-stroke:0.12px #2f9a40;">正常</div>
<div class="t" style="left:428.00px;top:291.20px;font-size:9.5px;line-height:14px;color:#45c936;letter-spacing:0.3px;-webkit-text-stroke:0.15px #45c936;">13.0</div>
<svg style="left:473.75px;top:292.40px" width="8" height="8" viewBox="0 0 8 8"><circle cx="4" cy="4" r="3.4" stroke="#6fd06a" stroke-width="0.8" fill="none"/><path d="M4 1.9 L4 4.2 L5.5 5.1" stroke="#6fd06a" stroke-width="0.8" fill="none"/></svg>
<div class="t" style="left:485.50px;top:292.40px;font-size:6.65px;line-height:10px;color:#444444;letter-spacing:0.34px;">2020-03-26 15:24:30</div>
<div class="b" style="left:589px;top:296.09999999999997px;width:6.8px;height:0.7px;background:#9a9a9a;"></div>
<div class="b" style="left:634.5px;top:296.09999999999997px;width:6.8px;height:0.7px;background:#9a9a9a;"></div>
<div class="b" style="left:672.75px;top:296.09999999999997px;width:6.8px;height:0.7px;background:#9a9a9a;"></div>
<div class="b" style="left:752.75px;top:296.09999999999997px;width:6.8px;height:0.7px;background:#9a9a9a;"></div>
<div class="b" style="left:804.9px;top:289.7px;width:34.8px;height:13.4px;background:#3b6cd9;border-radius:7px;"></div>
<div class="t" style="left:804.90px;width:34.80px;text-align:center;top:292.40px;font-size:6.3px;line-height:10px;color:#f0f4ff;">下发</div>
<div class="b" style="left:843.2px;top:289.7px;width:43.7px;height:13.4px;background:#50cec8;border-radius:7px;"></div>
<div class="t" style="left:843.20px;width:43.70px;text-align:center;top:292.40px;font-size:6.3px;line-height:10px;color:#f0fffd;">查看历史</div>
<div class="b" style="left:270.1px;top:310.7px;width:624.2px;height:1px;background:#e6ecee;"></div>
<div class="t" style="left:278.30px;top:323.50px;font-size:6.5px;line-height:10px;color:#3c3c3c;-webkit-text-stroke:0.1px #3c3c3c;">高锰酸盐指数</div>
<div class="b" style="left:362.1px;top:320.0px;width:38.7px;height:15px;background:#fbc5c6;"></div>
<div class="t" style="left:362.05px;width:38.70px;text-align:center;top:323.50px;font-size:6.4px;line-height:10px;color:#d8262e;-webkit-text-stroke:0.12px #d8262e;">离线</div>
<div class="b" style="left:427.9px;top:326.9px;width:5.3px;height:1.2px;background:#333333;"></div>
<svg style="left:473.75px;top:323.50px" width="8" height="8" viewBox="0 0 8 8"><circle cx="4" cy="4" r="3.4" stroke="#e04a50" stroke-width="0.8" fill="none"/><path d="M4 1.9 L4 4.2 L5.5 5.1" stroke="#e04a50" stroke-width="0.8" fill="none"/></svg>
<div class="b" style="left:485px;top:327.05px;width:6.8px;height:0.9px;background:#a0a0a0;"></div>
<div class="b" style="left:589px;top:327.2px;width:6.8px;height:0.7px;background:#9a9a9a;"></div>
<div class="b" style="left:634.5px;top:327.2px;width:6.8px;height:0.7px;background:#9a9a9a;"></div>
<div class="b" style="left:672.75px;top:327.2px;width:6.8px;height:0.7px;background:#9a9a9a;"></div>
<div class="b" style="left:752.75px;top:327.2px;width:6.8px;height:0.7px;background:#9a9a9a;"></div>
<div class="b" style="left:804.9px;top:320.8px;width:34.8px;height:13.4px;background:#3b6cd9;border-radius:7px;"></div>
<div class="t" style="left:804.90px;width:34.80px;text-align:center;top:323.50px;font-size:6.3px;line-height:10px;color:#f0f4ff;">下发</div>
<div class="b" style="left:843.2px;top:320.8px;width:43.7px;height:13.4px;background:#50cec8;border-radius:7px;"></div>
<div class="t" style="left:843.20px;width:43.70px;text-align:center;top:323.50px;font-size:6.3px;line-height:10px;color:#f0fffd;">查看历史</div>
<div class="b" style="left:270.1px;top:341.8px;width:624.2px;height:1px;background:#e6ecee;"></div>
<div class="t" style="left:278.30px;top:354.30px;font-size:6.5px;line-height:10px;color:#3c3c3c;-webkit-text-stroke:0.1px #3c3c3c;">流量</div>
<div class="b" style="left:362.1px;top:350.8px;width:38.7px;height:15px;background:#dcfad2;"></div>
<div class="t" style="left:362.05px;width:38.70px;text-align:center;top:354.30px;font-size:6.4px;line-height:10px;color:#2f9a40;-webkit-text-stroke:0.12px #2f9a40;">正常</div>
<div class="t" style="left:428.00px;top:353.10px;font-size:9.5px;line-height:14px;color:#45c936;letter-spacing:0.3px;-webkit-text-stroke:0.15px #45c936;">3.0</div>
<svg style="left:473.75px;top:354.30px" width="8" height="8" viewBox="0 0 8 8"><circle cx="4" cy="4" r="3.4" stroke="#6fd06a" stroke-width="0.8" fill="none"/><path d="M4 1.9 L4 4.2 L5.5 5.1" stroke="#6fd06a" stroke-width="0.8" fill="none"/></svg>
<div class="t" style="left:485.50px;top:354.30px;font-size:6.65px;line-height:10px;color:#444444;letter-spacing:0.34px;">2020-03-26 15:24:30</div>
<div class="b" style="left:589px;top:358.0px;width:6.8px;height:0.7px;background:#9a9a9a;"></div>
<div class="b" style="left:634.5px;top:358.0px;width:6.8px;height:0.7px;background:#9a9a9a;"></div>
<div class="b" style="left:672.75px;top:358.0px;width:6.8px;height:0.7px;background:#9a9a9a;"></div>
<div class="b" style="left:752.75px;top:358.0px;width:6.8px;height:0.7px;background:#9a9a9a;"></div>
<div class="b" style="left:804.9px;top:351.6px;width:34.8px;height:13.4px;background:#3b6cd9;border-radius:7px;"></div>
<div class="t" style="left:804.90px;width:34.80px;text-align:center;top:354.30px;font-size:6.3px;line-height:10px;color:#f0f4ff;">下发</div>
<div class="b" style="left:843.2px;top:351.6px;width:43.7px;height:13.4px;background:#50cec8;border-radius:7px;"></div>
<div class="t" style="left:843.20px;width:43.70px;text-align:center;top:354.30px;font-size:6.3px;line-height:10px;color:#f0fffd;">查看历史</div>
<div class="b" style="left:270.1px;top:373.4px;width:624.2px;height:1px;background:#e6ecee;"></div>
<div class="t" style="left:278.30px;top:385.70px;font-size:6.5px;line-height:10px;color:#3c3c3c;-webkit-text-stroke:0.1px #3c3c3c;">五日生化需氧量</div>
<div class="b" style="left:362.1px;top:382.2px;width:38.7px;height:15px;background:#dcfad2;"></div>
<div class="t" style="left:362.05px;width:38.70px;text-align:center;top:385.70px;font-size:6.4px;line-height:10px;color:#2f9a40;-webkit-text-stroke:0.12px #2f9a40;">正常</div>
<div class="t" style="left:428.00px;top:384.50px;font-size:9.5px;line-height:14px;color:#45c936;letter-spacing:0.3px;-webkit-text-stroke:0.15px #45c936;">48.0</div>
<svg style="left:473.75px;top:385.70px" width="8" height="8" viewBox="0 0 8 8"><circle cx="4" cy="4" r="3.4" stroke="#6fd06a" stroke-width="0.8" fill="none"/><path d="M4 1.9 L4 4.2 L5.5 5.1" stroke="#6fd06a" stroke-width="0.8" fill="none"/></svg>
<div class="t" style="left:485.50px;top:385.70px;font-size:6.65px;line-height:10px;color:#444444;letter-spacing:0.34px;">2020-03-26 15:24:30</div>
<div class="b" style="left:589px;top:389.4px;width:6.8px;height:0.7px;background:#9a9a9a;"></div>
<div class="b" style="left:634.5px;top:389.4px;width:6.8px;height:0.7px;background:#9a9a9a;"></div>
<div class="b" style="left:672.75px;top:389.4px;width:6.8px;height:0.7px;background:#9a9a9a;"></div>
<div class="b" style="left:752.75px;top:389.4px;width:6.8px;height:0.7px;background:#9a9a9a;"></div>
<div class="b" style="left:804.9px;top:383.0px;width:34.8px;height:13.4px;background:#3b6cd9;border-radius:7px;"></div>
<div class="t" style="left:804.90px;width:34.80px;text-align:center;top:385.70px;font-size:6.3px;line-height:10px;color:#f0f4ff;">下发</div>
<div class="b" style="left:843.2px;top:383.0px;width:43.7px;height:13.4px;background:#50cec8;border-radius:7px;"></div>
<div class="t" style="left:843.20px;width:43.70px;text-align:center;top:385.70px;font-size:6.3px;line-height:10px;color:#f0fffd;">查看历史</div>
<div class="b" style="left:270.1px;top:404.6px;width:624.2px;height:1px;background:#e6ecee;"></div>
<div class="t" style="left:278.30px;top:416.60px;font-size:6.5px;line-height:10px;color:#3c3c3c;-webkit-text-stroke:0.1px #3c3c3c;">总磷(以P计)</div>
<div class="b" style="left:362.1px;top:413.1px;width:38.7px;height:15px;background:#dcfad2;"></div>
<div class="t" style="left:362.05px;width:38.70px;text-align:center;top:416.60px;font-size:6.4px;line-height:10px;color:#2f9a40;-webkit-text-stroke:0.12px #2f9a40;">正常</div>
<div class="t" style="left:428.00px;top:415.40px;font-size:9.5px;line-height:14px;color:#45c936;letter-spacing:0.3px;-webkit-text-stroke:0.15px #45c936;">1.79</div>
<svg style="left:473.75px;top:416.60px" width="8" height="8" viewBox="0 0 8 8"><circle cx="4" cy="4" r="3.4" stroke="#6fd06a" stroke-width="0.8" fill="none"/><path d="M4 1.9 L4 4.2 L5.5 5.1" stroke="#6fd06a" stroke-width="0.8" fill="none"/></svg>
<div class="t" style="left:485.50px;top:416.60px;font-size:6.65px;line-height:10px;color:#444444;letter-spacing:0.34px;">2020-03-26 15:24:30</div>
<div class="b" style="left:589px;top:420.3px;width:6.8px;height:0.7px;background:#9a9a9a;"></div>
<div class="b" style="left:634.5px;top:420.3px;width:6.8px;height:0.7px;background:#9a9a9a;"></div>
<div class="b" style="left:672.75px;top:420.3px;width:6.8px;height:0.7px;background:#9a9a9a;"></div>
<div class="b" style="left:752.75px;top:420.3px;width:6.8px;height:0.7px;background:#9a9a9a;"></div>
<div class="b" style="left:804.9px;top:413.90000000000003px;width:34.8px;height:13.4px;background:#3b6cd9;border-radius:7px;"></div>
<div class="t" style="left:804.90px;width:34.80px;text-align:center;top:416.60px;font-size:6.3px;line-height:10px;color:#f0f4ff;">下发</div>
<div class="b" style="left:843.2px;top:413.90000000000003px;width:43.7px;height:13.4px;background:#50cec8;border-radius:7px;"></div>
<div class="t" style="left:843.20px;width:43.70px;text-align:center;top:416.60px;font-size:6.3px;line-height:10px;color:#f0fffd;">查看历史</div>
<div class="b" style="left:270.1px;top:435.3px;width:624.2px;height:1px;background:#e6ecee;"></div>
<div class="t" style="left:278.30px;top:447.50px;font-size:6.5px;line-height:10px;color:#3c3c3c;-webkit-text-stroke:0.1px #3c3c3c;">总氮(湖、库以N计)</div>
<div class="b" style="left:362.1px;top:444.0px;width:38.7px;height:15px;background:#dcfad2;"></div>
<div class="t" style="left:362.05px;width:38.70px;text-align:center;top:447.50px;font-size:6.4px;line-height:10px;color:#2f9a40;-webkit-text-stroke:0.12px #2f9a40;">正常</div>
<div class="t" style="left:428.00px;top:446.30px;font-size:9.5px;line-height:14px;color:#45c936;letter-spacing:0.3px;-webkit-text-stroke:0.15px #45c936;">0.54</div>
<svg style="left:473.75px;top:447.50px" width="8" height="8" viewBox="0 0 8 8"><circle cx="4" cy="4" r="3.4" stroke="#6fd06a" stroke-width="0.8" fill="none"/><path d="M4 1.9 L4 4.2 L5.5 5.1" stroke="#6fd06a" stroke-width="0.8" fill="none"/></svg>
<div class="t" style="left:485.50px;top:447.50px;font-size:6.65px;line-height:10px;color:#444444;letter-spacing:0.34px;">2020-03-26 15:24:30</div>
<div class="b" style="left:589px;top:451.2px;width:6.8px;height:0.7px;background:#9a9a9a;"></div>
<div class="b" style="left:634.5px;top:451.2px;width:6.8px;height:0.7px;background:#9a9a9a;"></div>
<div class="b" style="left:672.75px;top:451.2px;width:6.8px;height:0.7px;background:#9a9a9a;"></div>
<div class="b" style="left:752.75px;top:451.2px;width:6.8px;height:0.7px;background:#9a9a9a;"></div>
<div class="b" style="left:804.9px;top:444.8px;width:34.8px;height:13.4px;background:#3b6cd9;border-radius:7px;"></div>
<div class="t" style="left:804.90px;width:34.80px;text-align:center;top:447.50px;font-size:6.3px;line-height:10px;color:#f0f4ff;">下发</div>
<div class="b" style="left:843.2px;top:444.8px;width:43.7px;height:13.4px;background:#50cec8;border-radius:7px;"></div>
<div class="t" style="left:843.20px;width:43.70px;text-align:center;top:447.50px;font-size:6.3px;line-height:10px;color:#f0fffd;">查看历史</div>
<div class="b" style="left:270.1px;top:466.8px;width:624.2px;height:1px;background:#e6ecee;"></div>
</body></html>
